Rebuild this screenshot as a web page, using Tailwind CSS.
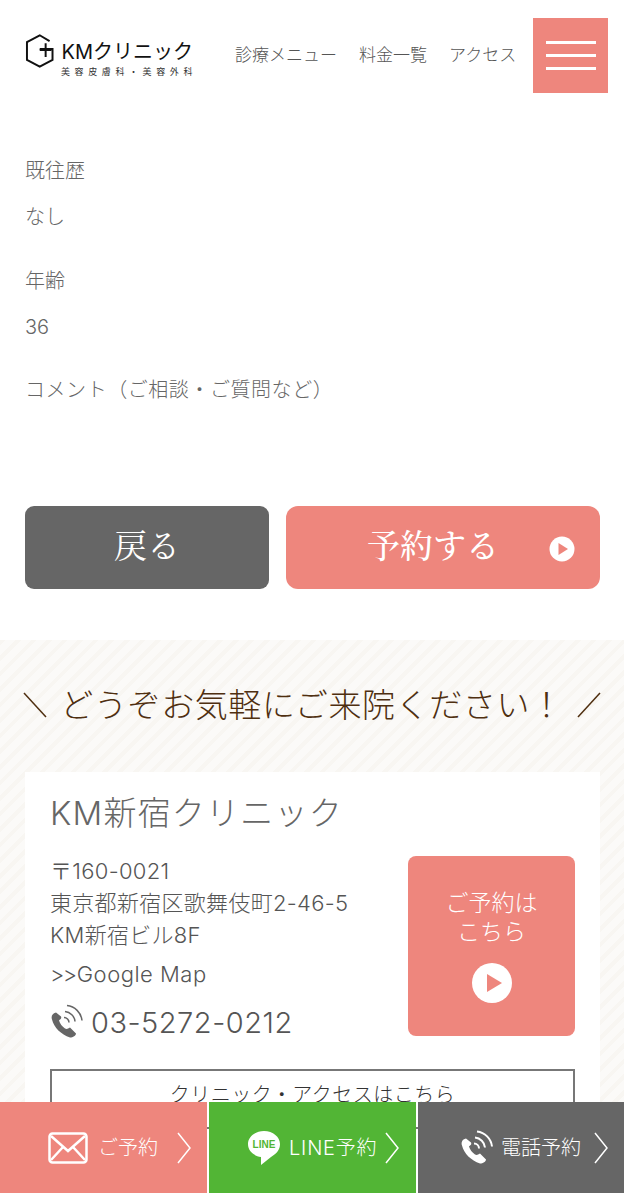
<!DOCTYPE html>
<html lang="ja">
<head>
    <meta charset="UTF-8">
    <meta name="viewport" content="width=device-width, initial-scale=1.0">
    <title>KMクリニック</title>
    <script src="https://cdn.jsdelivr.net/npm/@tailwindcss/browser@4"></script>
</head>
<body class="bg-white font-['Inter','Noto_Sans_CJK_JP',sans-serif] font-light text-[#666]">
    <div class="relative h-[1200px] w-[624px] overflow-hidden">

        <!-- Form values (scrolled under the header) -->
        <div class="px-[25px] pt-[157px] text-[20px] leading-[28px]">
            <p>既往歴</p>
            <p class="mt-[18px]">なし</p>
            <p class="mt-[36px]">年齢</p>
            <p class="mt-[18px]">36</p>
            <p class="mt-[35px] tracking-[0.55px]">コメント（ご相談・ご質問など）</p>
        </div>

        <!-- Buttons -->
        <div class="mt-[102px] flex gap-[17px] pl-[25px] pr-[24px]">
            <a class="flex h-[83px] w-[244px] items-center justify-center rounded-[9px] bg-[#666] pb-[7px] font-['Noto_Serif_CJK_JP','Liberation_Serif','Noto_Sans_CJK_JP',serif] text-[33px] font-normal text-white">戻る</a>
            <a class="relative flex h-[83px] flex-1 items-center justify-center rounded-[12px] bg-[#ee867d] pb-[7px] pr-[20px] font-['Noto_Serif_CJK_JP','Liberation_Serif','Noto_Sans_CJK_JP',serif] text-[33px] font-medium text-white">
                予約する
                <svg class="absolute right-[25px] top-[30px] h-[26px] w-[26px]" viewBox="0 0 26 26"><circle cx="13" cy="13" r="12.5" fill="#fff"/><path d="M9.500 7 19 13l-9.500 6z" fill="#ee867d"/></svg>
            </a>
        </div>

        <!-- Access section -->
        <section class="mt-[51px] bg-[repeating-linear-gradient(135deg,#f8f6f2_0,#f8f6f2_4px,#fbfaf8_4px,#fbfaf8_11px)] pl-[25px] pr-[24px] pt-[43px]">
            <h2 class="-ml-[2px] -mr-[1px] flex items-center justify-between whitespace-nowrap text-[33px] leading-[44px] tracking-[0.6px] text-[#4f2f10]">
                <svg class="h-[26px] w-[24px]" viewBox="0 0 24 26"><path d="M1 1l22 24" stroke="#4f2f10" stroke-width="1.500"/></svg>
                <span>どうぞお気軽にご来院ください！</span>
                <svg class="h-[26px] w-[24px]" viewBox="0 0 24 26"><path d="M23 1 1 25" stroke="#4f2f10" stroke-width="1.500"/></svg>
            </h2>

            <div class="mt-[45px] bg-white px-[25px] pt-[19px] pb-[40px]">
                <h3 class="text-[33px] leading-[44px] tracking-[1.2px]">KM新宿クリニック</h3>
                <div class="mt-[21px] flex justify-between">
                    <div class="-mt-[1px] text-[22px] leading-[32px] tracking-[0.3px] text-[#555]">
                        <p>〒160-0021<br>東京都新宿区歌舞伎町2-46-5<br>KM新宿ビル8F</p>
                        <p class="mt-[7px] tracking-[0.5px]"><span class="tracking-[-1.5px]">&gt;&gt;</span><span class="ml-[1px]">Google Map</span></p>
                        <div class="mt-[14px] flex items-end gap-[7px]">
                            <svg class="mb-[2px] h-[35px] w-[34px]" viewBox="0 0 34 34" fill="none">
                                <path d="M6 8C2 9 1 12 2 15c2 8 9 15 18 18 3 0 6-2 6-4l-6-6c-2 1-3 2-5 1-3-2-5-5-6-8 1-1 3-2 2-4z" fill="#666"/>
                                <path d="M14 13a5 5 0 0 1 5 5M15 7a11 11 0 0 1 10 10M17 1a17 17 0 0 1 15 15" stroke="#666" stroke-width="1.500"/>
                            </svg>
                            <span class="text-[29px] leading-[36px] tracking-[0.5px] text-[#555]">03-5272-0212</span>
                        </div>
                    </div>
                    <a class="flex h-[180px] w-[167px] flex-col items-center rounded-[8px] bg-[#ee867d] pt-[33px] text-white">
                        <span class="text-center text-[23px] leading-[29px]">ご予約は<br>こちら</span>
                        <svg class="mt-[16px] h-[40px] w-[40px]" viewBox="0 0 40 40"><circle cx="20" cy="20" r="20" fill="#fff"/><path d="M15 11 30 20l-15 9z" fill="#ee867d"/></svg>
                    </a>
                </div>
                <a class="mt-[28px] block h-[60px] border-2 border-[#777] pt-[10px] text-center text-[20px] leading-[28px] tracking-[0.5px] text-[#333]">クリニック・アクセスはこちら</a>
            </div>
        </section>

        <!-- Fixed header -->
        <header class="absolute inset-x-0 top-[5px] flex h-[100px] items-center bg-white pl-[25px] pr-[16px]">
            <div class="flex w-[168px] flex-col">
                <div class="flex items-center">
                    <svg class="h-[36px] w-[30px]" viewBox="0 0 30 36" fill="none" stroke="#111" stroke-width="2">
                        <path d="M25 8 15 2 2 9v18l13 7 13-7V16H15"/>
                        <path d="M21 10v14M15 17h12"/>
                    </svg>
                    <span class="ml-[7px] whitespace-nowrap pt-[3px] text-[20px] font-normal leading-[28px] text-[#111]">KMクリニック</span>
                </div>
                <span class="-mr-[4px] -mt-[3px] self-end whitespace-nowrap text-[9px] font-normal leading-[12px] tracking-[4.6px] text-[#333]">美容皮膚科・美容外科</span>
            </div>
            <nav class="ml-[42px] flex gap-[22px] whitespace-nowrap pt-[2px] text-[17px] text-[#555]">
                <a>診療メニュー</a>
                <a>料金一覧</a>
                <a>アクセス</a>
            </nav>
            <button class="ml-auto flex h-[75px] w-[75px] flex-col items-center justify-center gap-[10px] bg-[#ee867d]">
                <span class="h-[3px] w-[50px] bg-white"></span>
                <span class="h-[3px] w-[50px] bg-white"></span>
                <span class="h-[3px] w-[50px] bg-white"></span>
            </button>
        </header>

        <!-- Fixed bottom bar -->
        <nav class="absolute inset-x-0 top-[1102px] flex h-[91px] gap-[2px] text-[20px] text-white">
            <a class="flex w-[207px] items-center bg-[#ee867d] pl-[48px]">
                <svg class="h-[32px] w-[40px]" viewBox="0 0 40 32" fill="none" stroke="#fff" stroke-width="2.500"><rect x="1.500" y="1.500" width="37" height="29" rx="3"/><path d="m3 4 17 15L37 4M3 28l12-13M37 28 25 15"/></svg>
                <span class="ml-[10px]">ご予約</span>
                <svg class="ml-[19px] h-[32px] w-[14px]" viewBox="0 0 14 32" fill="none" stroke="#fff" stroke-width="1.500"><path d="m1 1 12 15L1 31"/></svg>
            </a>
            <a class="flex w-[207px] items-center bg-[#52b535] pl-[38px]">
                <svg class="h-[36px] w-[34px]" viewBox="0 0 34 36"><path d="M17 1C8 1 1 7 1 14c0 7 6 12 13 13l0 8 10-8c5-3 9-7 9-13 0-7-7-13-16-13z" fill="#fff"/><text x="17" y="18" text-anchor="middle" font-size="10" font-weight="700" fill="#52b535" font-family="Liberation Sans, sans-serif">LINE</text></svg>
                <span class="ml-[8px] tracking-[0.8px]">LINE予約</span>
                <svg class="ml-[8px] h-[32px] w-[14px]" viewBox="0 0 14 32" fill="none" stroke="#fff" stroke-width="1.500"><path d="m1 1 12 15L1 31"/></svg>
            </a>
            <a class="flex flex-1 items-center bg-[#666] pl-[42px]">
                <svg class="h-[35px] w-[34px]" viewBox="0 0 34 34" fill="none">
                    <path d="M6 8C2 9 1 12 2 15c2 8 9 15 18 18 3 0 6-2 6-4l-6-6c-2 1-3 2-5 1-3-2-5-5-6-8 1-1 3-2 2-4z" fill="#fff"/>
                    <path d="M14 13a5 5 0 0 1 5 5M15 7a11 11 0 0 1 10 10M17 1a17 17 0 0 1 15 15" stroke="#fff" stroke-width="2"/>
                </svg>
                <span class="ml-[7px]">電話予約</span>
                <svg class="ml-[13px] h-[32px] w-[14px]" viewBox="0 0 14 32" fill="none" stroke="#fff" stroke-width="1.500"><path d="m1 1 12 15L1 31"/></svg>
            </a>
        </nav>

        <!-- Text cut off at the top edge -->
        <p class="absolute left-[25px] top-[-23px] text-[20px] leading-[28px]">生年月日</p>
    </div>
</body>
</html>
